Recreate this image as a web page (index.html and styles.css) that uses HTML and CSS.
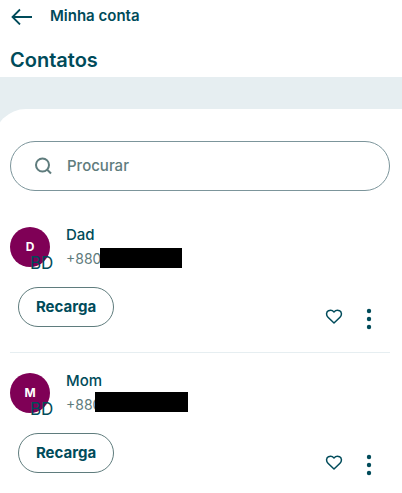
FILE: index.html
```html
<!DOCTYPE html>
<html lang="pt">
<head>
<meta charset="utf-8">
<meta name="viewport" content="width=device-width, initial-scale=1">
<title>Contatos</title>
<link rel="stylesheet" href="styles.css">
</head>
<body>
<header class="header">
  <a class="back" href="#">
    <svg width="22" height="18" viewBox="0 0 22 18" fill="none" stroke="currentColor" stroke-width="1.8" aria-hidden="true"><path d="M22 10H3M10 2.500L2.500 10L10 17.500"/></svg>
    <span>Minha conta</span>
  </a>
  <h1 class="title">Contatos</h1>
</header>
<main class="backdrop">
  <div class="panel">
    <label class="search">
      <svg width="18" height="18" viewBox="0 0 18 18" fill="none" stroke="currentColor" stroke-width="2" aria-hidden="true"><circle cx="7.500" cy="8" r="6.500"/><path d="M12 12.500L16 16.500"/></svg>
      <input type="search" placeholder="Procurar" aria-label="Procurar">
    </label>
    <ul class="contacts">
      <li class="contact">
        <div class="person">
          <div class="avatar">D<span class="country">BD</span></div>
          <div class="details">
            <div class="name">Dad</div>
            <div class="phone">+880<span class="mask"></span></div>
          </div>
        </div>
        <div class="actions">
          <button class="recharge" type="button">Recarga</button>
          <div class="tools">
            <button class="icon" type="button" aria-label="Favorito"><svg width="18" height="16" viewBox="0 0 18 16" fill="none" stroke="currentColor" stroke-width="1.500" stroke-linejoin="round"><path d="M9 15L3 9.200C0.800 7 1.300 3.800 3.500 2.700C5.400 1.900 7.700 2.500 9 4C10.300 2.500 12.600 1.900 14.500 2.700C16.700 3.800 17.200 7 15 9.200Z"/></svg></button>
            <button class="icon" type="button" aria-label="Mais"><svg width="6" height="22" viewBox="0 0 6 22" fill="currentColor"><circle cx="3" cy="3" r="2.200"/><circle cx="3" cy="11" r="2.200"/><circle cx="3" cy="19" r="2.200"/></svg></button>
          </div>
        </div>
      </li>
      <li class="contact">
        <div class="person">
          <div class="avatar">M<span class="country">BD</span></div>
          <div class="details">
            <div class="name">Mom</div>
            <div class="phone">+880<span class="mask mask-wide"></span></div>
          </div>
        </div>
        <div class="actions">
          <button class="recharge" type="button">Recarga</button>
          <div class="tools">
            <button class="icon" type="button" aria-label="Favorito"><svg width="18" height="16" viewBox="0 0 18 16" fill="none" stroke="currentColor" stroke-width="1.500" stroke-linejoin="round"><path d="M9 15L3 9.200C0.800 7 1.300 3.800 3.500 2.700C5.400 1.900 7.700 2.500 9 4C10.300 2.500 12.600 1.900 14.500 2.700C16.700 3.800 17.200 7 15 9.200Z"/></svg></button>
            <button class="icon" type="button" aria-label="Mais"><svg width="6" height="22" viewBox="0 0 6 22" fill="currentColor"><circle cx="3" cy="3" r="2.200"/><circle cx="3" cy="11" r="2.200"/><circle cx="3" cy="19" r="2.200"/></svg></button>
          </div>
        </div>
      </li>
    </ul>
  </div>
</main>
</body>
</html>
```
FILE: styles.css
```css
* { box-sizing: border-box; }

body {
  margin: 0;
  background: #fff;
  color: #004b5a;
  font-family: Inter, "Liberation Sans", sans-serif;
  font-size: 15px;
  line-height: 24px;
  overflow-x: hidden;
}

button, input { font: inherit; color: inherit; }

.header { padding: 4px 10px 5px; }

.back {
  display: flex;
  align-items: center;
  gap: 18px;
  color: inherit;
  font-weight: 600;
  text-decoration: none;
}

.title {
  margin: 20px 0 0;
  font-size: 20px;
  line-height: 24px;
  font-weight: 600;
}

.backdrop {
  padding-top: 32px;
  background: #e6eef1;
  overflow: hidden;
}

.panel {
  margin-left: -6px;
  padding: 32px 12px 0 16px;
  border-top-left-radius: 32px;
  background: #fff;
}

.search {
  display: flex;
  align-items: center;
  gap: 14px;
  height: 50px;
  padding: 0 24px;
  border: 1px solid #7c959b;
  border-radius: 25px;
  color: #5f7c7d;
}

.search input {
  flex: 1;
  min-width: 0;
  padding: 0;
  border: 0;
  outline: 0;
  background: none;
  font-weight: 500;
}

.search input::placeholder { color: inherit; opacity: 1; }

.contacts {
  margin: 16px 0 0;
  padding: 0;
  list-style: none;
}

.contact { padding: 16px 0 22px; }

.contact:not(:last-child) { border-bottom: 1px solid #e6eef1; }

.person {
  display: flex;
  align-items: center;
  gap: 16px;
}

.avatar {
  position: relative;
  width: 40px;
  height: 40px;
  border-radius: 50%;
  background: #7f0056;
  color: #fff;
  font-size: 12px;
  font-weight: 700;
  line-height: 40px;
  text-align: center;
}

.country {
  position: absolute;
  left: 20px;
  bottom: -8px;
  color: #004b5a;
  font-size: 17px;
  font-weight: 400;
  line-height: 24px;
}

.name { font-weight: 500; }

.phone {
  position: relative;
  color: #5f7c7d;
  font-size: 14px;
}

.mask {
  position: absolute;
  top: 1px;
  left: 34px;
  width: 82px;
  height: 20px;
  background: #000;
}

.mask-wide {
  top: -1px;
  left: 29px;
  width: 93px;
}

.actions {
  display: flex;
  align-items: flex-start;
  justify-content: space-between;
  margin-top: 16px;
  padding: 0 18px 0 8px;
}

.recharge {
  width: 96px;
  height: 40px;
  padding: 0;
  border: 1px solid #5f7c7d;
  border-radius: 20px;
  background: #fff;
  font-weight: 700;
}

.tools {
  display: flex;
  align-items: flex-start;
  gap: 23px;
  padding-top: 21px;
}

.icon {
  display: flex;
  padding: 0;
  border: 0;
  background: none;
}
```
